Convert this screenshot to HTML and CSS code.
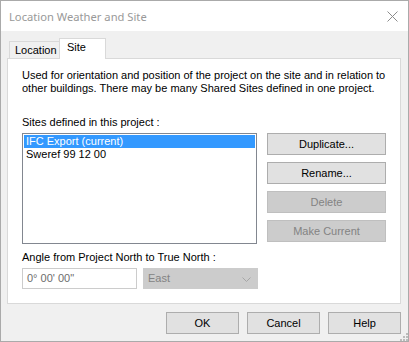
FILE: index.html
```html
<!DOCTYPE html>
<html lang="en">
<head>
    <meta charset="UTF-8">
    <title>Location Weather and Site</title>
    <link rel="stylesheet" href="styles.css">
</head>
<body>
    <div class="dialog">
        <div class="titlebar">
            <span class="titlebar__text">Location Weather and Site</span>
            <svg class="titlebar__close" width="11" height="11" viewBox="0 0 11 11">
                <path d="M0.5 0.5 L10.5 10.5 M10.5 0.5 L0.5 10.5" stroke="#8c8c8c" stroke-width="1" fill="none"/>
            </svg>
        </div>
        <div class="dialog__body">
            <div class="tabs">
                <div class="tab">Location</div>
                <div class="tab is-selected">Site</div>
            </div>
            <div class="panel">
                <p class="panel__intro">Used for orientation and position of the project on the site and in relation to<br>other buildings. There may be many Shared Sites defined in one project.</p>
                <div class="field-label sites-label">Sites defined in this project :</div>
                <div class="sites">
                    <ul class="listbox">
                        <li class="listbox__item is-selected">IFC Export (current)</li>
                        <li class="listbox__item">Sweref 99 12 00</li>
                    </ul>
                    <div class="sites__buttons">
                        <button class="button">Duplicate...</button>
                        <button class="button">Rename...</button>
                        <button class="button" disabled>Delete</button>
                        <button class="button" disabled>Make Current</button>
                    </div>
                </div>
                <div class="field-label angle-label">Angle from Project North to True North :</div>
                <div class="angle">
                    <div class="textbox">0° 00' 00"</div>
                    <div class="combo">
                        <span>East</span>
                        <svg width="9" height="5" viewBox="0 0 9 5">
                            <path d="M0.5 0.5 L4.5 4.5 L8.5 0.5" stroke="#a6a6a6" fill="none"/>
                        </svg>
                    </div>
                </div>
            </div>
            <div class="footer">
                <button class="button button--footer">OK</button>
                <button class="button button--footer">Cancel</button>
                <button class="button button--footer">Help</button>
            </div>
            <svg class="grip" width="8" height="8" viewBox="0 0 8 8">
                <rect x="6" y="0" width="2" height="2" fill="#bcbcbc"/>
                <rect x="3" y="3" width="2" height="2" fill="#bcbcbc"/>
                <rect x="6" y="3" width="2" height="2" fill="#bcbcbc"/>
                <rect x="0" y="6" width="2" height="2" fill="#bcbcbc"/>
                <rect x="3" y="6" width="2" height="2" fill="#bcbcbc"/>
                <rect x="6" y="6" width="2" height="2" fill="#bcbcbc"/>
            </svg>
        </div>
    </div>
</body>
</html>
```

FILE: styles.css
```css
html, body { margin: 0; padding: 0; }
body { font-family: "Liberation Sans", Arial, sans-serif; font-size: 11px; line-height: 13px; color: #000; }

.dialog { width: 409px; height: 342px; box-sizing: border-box; border: 1px solid #aaaaaa; display: flex; flex-direction: column; }

.titlebar { height: 30px; flex: none; background: #fff; display: flex; align-items: center; justify-content: space-between; padding: 0 10px 0 8px; }
.titlebar__text { font-family: "Noto Sans", sans-serif; font-size: 11.2px; color: #999999; }
.titlebar__close { display: block; }

.dialog__body { flex: 1; position: relative; background: #f0f0f0; padding: 7px 7px 7px 6px; display: flex; flex-direction: column; }

.tabs { display: flex; align-items: flex-end; padding-left: 2px; height: 20px; }
.tab { box-sizing: border-box; height: 17px; width: 50px; padding: 2px 0 0 5px; border: 1px solid #d9d9d9; border-bottom: 0; border-right: 0; background: #f0f0f0; }
.tab.is-selected { position: relative; z-index: 1; height: 21px; width: 47px; margin-bottom: -1px; padding: 2px 0 0 7px; border-right: 1px solid #d9d9d9; background: #fff; }

.panel { box-sizing: border-box; height: 246px; background: #fff; border: 1px solid #d9d9d9; padding: 10px 14px 0 14px; }
.panel__intro { margin: 0; }

.sites-label { margin-top: 21px; }
.sites { display: flex; gap: 10px; margin-top: 4px; }

.listbox { box-sizing: border-box; width: 237px; height: 111px; margin: 0; padding: 1px; list-style: none; border: 1px solid #828790; background: #fff; }
.listbox__item { height: 13px; padding-left: 2px; white-space: nowrap; }
.listbox__item.is-selected { background: #3399ff; color: #fff; }

.sites__buttons { display: flex; flex-direction: column; gap: 7px; }

.button { box-sizing: border-box; width: 119px; height: 22px; padding: 0; margin: 0; font: inherit; color: #000; background: #e1e1e1; border: 1px solid #adadad; }
.button:disabled { background: #cccccc; border-color: #bfbfbf; color: #838383; }
.button--footer { width: 73px; }

.angle-label { margin-top: 7px; }
.angle { display: flex; gap: 6px; margin-top: 4px; }
.textbox { box-sizing: border-box; width: 115px; height: 21px; padding: 3px 0 0 4px; border: 1px solid #cccccc; color: #6d6d6d; }
.combo { box-sizing: border-box; width: 115px; height: 21px; padding: 3px 6px 0 4px; background: #cccccc; border: 1px solid #cccccc; color: #838383; display: flex; justify-content: space-between; }
.combo svg { margin-top: 5px; }

.footer { display: flex; justify-content: flex-end; gap: 8px; margin-top: 8px; }

.grip { position: absolute; right: 0; bottom: 0; }
```
